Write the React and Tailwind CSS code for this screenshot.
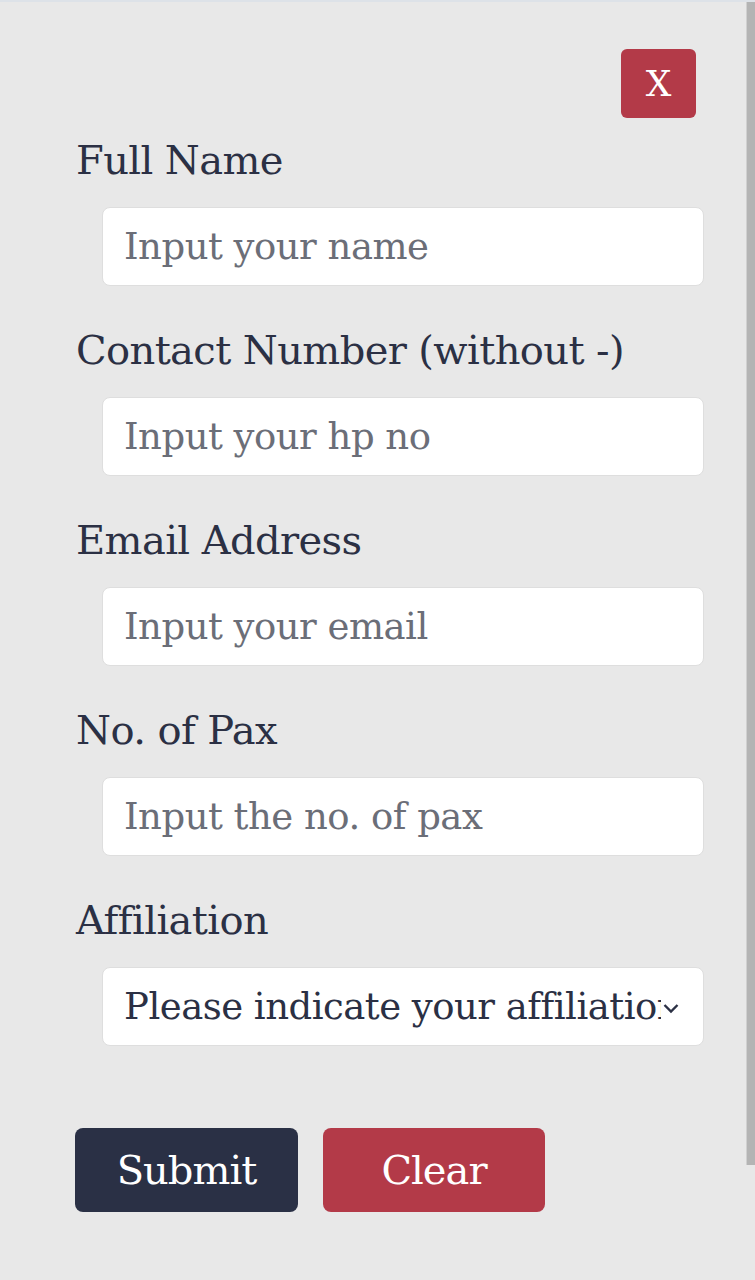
import React from 'react';

const fields = [
  { label: 'Full Name', placeholder: 'Input your name' },
  { label: 'Contact Number (without -)', placeholder: 'Input your hp no' },
  { label: 'Email Address', placeholder: 'Input your email' },
  { label: 'No. of Pax', placeholder: 'Input the no. of pax' },
];

const App = () => {
  return (
    <div
      className="min-h-screen w-[755px] bg-[#e8e8e8] flex border-t-2 border-[#dde2e8]"
      style={{ fontFamily: '"DejaVu Serif", "Liberation Serif", serif' }}
    >
      <div className="flex-1 flex flex-col">
        {/* Close */}
        <div className="flex justify-end pt-[47px] pr-[50px]">
          <button className="w-[75px] h-[69px] rounded-md bg-[#b33a48] text-white text-[36px] flex items-center justify-center">
            X
          </button>
        </div>

        {/* Form */}
        <form className="flex flex-col pl-[76px] pr-[42px] pt-[18px]">
          {fields.map((f, i) => (
            <div key={f.label} className={i > 0 ? 'mt-[40px]' : ''}>
              <label className="block text-[40px] leading-[48px] text-[#2b3044] tracking-[-0.6px]">
                {f.label}
              </label>
              <input
                type="text"
                placeholder={f.placeholder}
                className="mt-[23px] ml-[26px] w-[602px] h-[79px] bg-white border border-[#dedede] rounded-lg px-[21px] text-[37px] text-[#2b3044] placeholder-[#6b6e78] tracking-[-0.5px] outline-none"
              />
            </div>
          ))}

          <div className="mt-[40px]">
            <label className="block text-[40px] leading-[48px] text-[#2b3044] tracking-[-0.6px]">
              Affiliation
            </label>
            <div className="mt-[23px] ml-[26px] w-[602px] h-[79px] bg-white border border-[#dedede] rounded-lg pl-[21px] pr-[24px] flex items-center">
              {/* the reference shows this select's text cut off by the arrow */}
              <span className="w-[538px] overflow-hidden whitespace-nowrap text-[37px] text-[#2b3044] tracking-[-0.5px]">
                Please indicate your affiliation
              </span>
              <svg width="16" height="11" viewBox="0 0 16 11" className="shrink-0 ml-[2px] mt-[3px]">
                <path d="M1.5 2l6.5 6.5 6.5-6.5" fill="none" stroke="#2b3044" strokeWidth="2.4" />
              </svg>
            </div>
          </div>

          <div className="flex gap-[25px] mt-[82px] -ml-px">
            <button type="button" className="w-[223px] h-[84px] rounded-lg bg-[#2a3045] text-white text-[40px] tracking-[-1px]">
              Submit
            </button>
            <button type="button" className="w-[222px] h-[84px] rounded-lg bg-[#b33a48] text-white text-[40px] tracking-[-1px]">
              Clear
            </button>
          </div>
        </form>
      </div>

      {/* Scrollbar */}
      <div className="w-[9px] flex flex-col">
        <div className="h-[1163px] bg-[#b4b4b4] border-l border-[#d0d0d0]" />
      </div>
    </div>
  );
};

export default App;
